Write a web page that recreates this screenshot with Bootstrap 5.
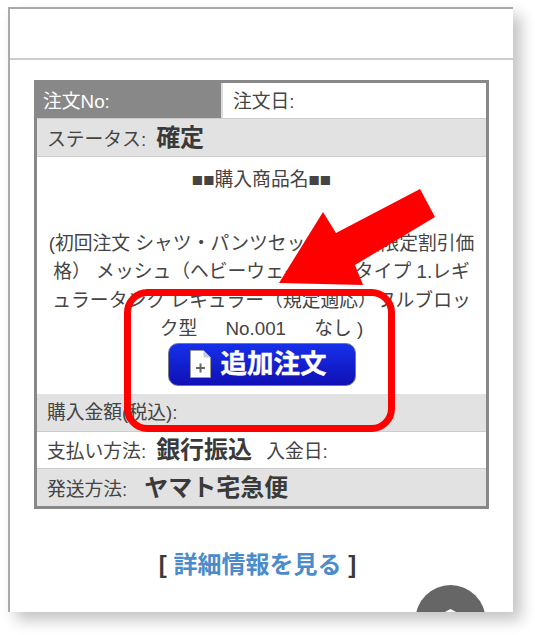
<!DOCTYPE html>
<html lang="ja">
<head>
    <meta charset="UTF-8">
    <meta name="viewport" content="width=device-width, initial-scale=1.0">
    <title>注文履歴</title>
    <link href="https://cdn.jsdelivr.net/npm/bootstrap@5.3.0/dist/css/bootstrap.min.css" rel="stylesheet">
    <style>
        html, body {
            height: 635px;
            overflow: hidden;
            background-color: #fff;
        }
        body {
            font-family: "Liberation Sans", "Noto Sans CJK JP", sans-serif;
            color: #444;
            font-size: 18.8px;
            padding: 7px 22px 23px 8px;
        }
        .frame {
            height: 605px;
            background-color: #fff;
            border-top: 2px solid #aaa;
            border-left: 2px solid #aaa;
            box-shadow: 8px 8px 14px rgba(0, 0, 0, .24);
            overflow: hidden;
        }
        .frame-head {
            height: 51px;
            border-bottom: 2px solid #ccc;
        }
        .order-box {
            margin: 20px 24px 0 24px;
            border: 3px solid #888;
            height: 429px;
        }
        .order-row {
            height: 38px;
            padding-left: 10px;
            border-bottom: 1px solid #ccc;
            column-gap: 10px;
            line-height: 38px;
        }
        .order-row.shaded { background-color: #e2e2e2; }
        .order-row strong {
            font-size: 24px;
            color: #3a3a3a;
        }
        .order-row.head-row {
            height: 36px;
            padding-left: 0;
            column-gap: 0;
        }
        .order-row.pay-row {
            height: 37px;
            line-height: 36px;
        }
        .order-row.ship-row {
            height: 37px;
            column-gap: 17px;
            border-bottom: 0;
        }
        .cell-no {
            width: 184px;
            height: 100%;
            padding-left: 6px;
            background-color: #888;
            color: #fff;
        }
        .cell-date {
            padding-left: 10px;
            border-left: 2px solid #ddd;
            height: 100%;
        }
        .order-item {
            height: 237px;
            padding: 9px 8px 0 8px;
            line-height: 28.5px;
        }
        .item-name {
            margin-top: 35px;
            line-break: loose;
        }
        .add-btn {
            width: 188px;
            height: 43px;
            margin-top: -1px;
            padding-right: 7px;
            column-gap: 10px;
            border: 1px solid #778;
            border-radius: 10px;
            background: linear-gradient(#1530ea, #1010b4);
            color: #fff;
            font-size: 26.5px;
            font-weight: 700;
            -webkit-text-stroke: .4px #fff;
        }
        .more-link {
            margin-top: 38px;
            padding-right: 8px;
            font-size: 24px;
            font-weight: 700;
            color: #3a3a3a;
        }
        .more-link a {
            color: #4a8bcb;
            text-decoration: none;
        }
        .overlay {
            position: absolute;
            left: 0;
            top: 0;
        }
        .to-top {
            position: absolute;
            left: 415px;
            top: 584px;
            width: 71px;
            height: 28px;
            overflow: hidden;
        }
    </style>
</head>
<body>
    <div class="frame">
        <div class="frame-head"></div>
        <div class="order-box">
            <div class="order-row head-row d-flex">
                <div class="cell-no">注文No:</div>
                <div class="cell-date">注文日:</div>
            </div>
            <div class="order-row shaded d-flex align-items-baseline">ステータス: <strong>確定</strong></div>
            <div class="order-item text-center">
                <div>■■購入商品名■■</div>
                <div class="item-name">(初回注文 シャツ・パンツセット【初回限定割引価格） メッシュ（ヘビーウェイト）&ensp; タイプ 1.レギュラータンク レキュラー（規定適応）フルブロック型&emsp;&ensp;No.001&emsp;&ensp;なし )</div>
                <div class="d-flex justify-content-center">
                    <div class="add-btn d-flex align-items-center justify-content-center">
                        <svg width="21" height="28" viewBox="0 0 21 28">
                            <path d="M.5.5h13l7 7v20H.5z" fill="#fff" stroke="#999"/>
                            <path d="M13.500.5v7h7z" fill="#ccd"/>
                            <path d="M6 18h9M10.500 13.500v9" stroke="#666" stroke-width="2"/>
                        </svg>
                        <span>追加注文</span>
                    </div>
                </div>
            </div>
            <div class="order-row shaded d-flex align-items-baseline">購入金額(税込):</div>
            <div class="order-row pay-row d-flex align-items-baseline">支払い方法: <strong>銀行振込</strong> <span class="ms-1">入金日:</span></div>
            <div class="order-row ship-row shaded d-flex align-items-baseline">発送方法: <strong>ヤマト宅急便</strong></div>
        </div>
        <div class="more-link text-center">[ <a href="#">詳細情報を見る</a> ]</div>
    </div>

    <div class="to-top">
        <svg width="71" height="28" viewBox="0 0 71 28">
            <circle cx="35.500" cy="35" r="35" fill="#666"/>
            <polygon points="28,28 35.500,24 43,28" fill="#fff"/>
        </svg>
    </div>

    <svg class="overlay" width="535" height="635" viewBox="0 0 535 635">
        <polygon points="420,189 435,217 355,265 363,285 279,283 323,212 336,233" fill="#f00"/>
        <rect x="127.500" y="292.500" width="264" height="136" rx="20" fill="none" stroke="#f00" stroke-width="7"/>
    </svg>
</body>
</html>
